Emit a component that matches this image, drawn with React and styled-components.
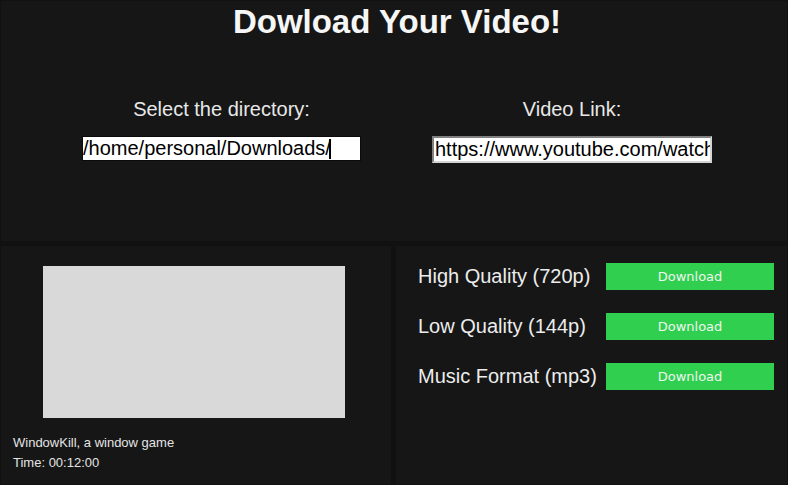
import React, { useEffect, useRef } from 'react';
import styled, { createGlobalStyle } from 'styled-components';

const GlobalStyle = createGlobalStyle`
  html, body {
    margin: 0;
    padding: 0;
    background: #111111;
  }
  body {
    font-family: "Liberation Sans", Arial, sans-serif;
  }
`;

const Page = styled.div`
  display: grid;
  grid-template-columns: 390px 1fr;
  grid-template-rows: 240px 1fr;
  gap: 5px;
  padding: 1px;
  width: 788px;
  height: 485px;
  box-sizing: border-box;
  background: #111111;
`;

const Panel = styled.section`
  background: #161616;
  color: #ececec;
  box-sizing: border-box;
  min-width: 0;
`;

const Header = styled(Panel)`
  grid-column: 1 / 3;
  padding: 2px 0 0 6px;
  display: flex;
  flex-direction: column;
  align-items: center;
`;

const Title = styled.h1`
  margin: 0;
  font-size: 33px;
  font-weight: bold;
  color: #f6f6f6;
`;

const Fields = styled.div`
  display: flex;
  justify-content: center;
  gap: 71px;
  margin-top: 57px;
`;

const Field = styled.label`
  display: flex;
  flex-direction: column;
  align-items: center;
  gap: 15px;
`;

const FieldLabel = styled.span`
  font-size: 20px;
  color: #e8e8e8;
`;

const TextInput = styled.input`
  box-sizing: border-box;
  width: ${(p) => p.$width}px;
  height: ${(p) => (p.$inset ? 27 : 25)}px;
  padding: 0 0 0 ${(p) => (p.$inset ? 1 : 0)}px;
  margin: 0;
  font-family: "Liberation Sans", Arial, sans-serif;
  font-size: 20px;
  color: #000;
  background-color: #fff;
  background-image: ${(p) =>
    p.$caret != null ? 'linear-gradient(#000, #000)' : 'none'};
  background-repeat: no-repeat;
  background-position: ${(p) => p.$caret || 0}px 2px;
  background-size: 2px 20px;
  border: ${(p) => (p.$inset ? '2px inset #d4d4d4' : '1px solid #0a0a0a')};
  border-radius: 0;
  outline: none;
  caret-color: transparent;
`;

const VideoPanel = styled(Panel)`
  display: flex;
  flex-direction: column;
  padding: 20px 0 0 12px;
`;

const Thumb = styled.div`
  width: 302px;
  height: 152px;
  margin-left: 30px;
  background: #d9d9d9;
`;

const Meta = styled.div`
  margin-top: 15px;
  font-size: 13px;
  line-height: 20px;
  color: #e4e4e4;
`;

const OptionsPanel = styled(Panel)`
  display: grid;
  grid-template-columns: 188px 168px;
  grid-auto-rows: 27px;
  row-gap: 23px;
  align-content: start;
  align-items: center;
  padding: 17px 0 0 22px;
`;

const OptionLabel = styled.span`
  font-size: 20px;
  color: #ececec;
  white-space: nowrap;
`;

const DownloadButton = styled.button`
  height: 27px;
  width: 168px;
  border: none;
  border-radius: 0;
  background: #30cf50;
  color: #eef6ee;
  font-family: "DejaVu Sans", sans-serif;
  font-size: 13px;
  padding: 0;
  cursor: pointer;
`;

const options = [
  { id: 'high', label: 'High Quality (720p)' },
  { id: 'low', label: 'Low Quality (144p)' },
  { id: 'mp3', label: 'Music Format (mp3)' },
];

export default function App() {
  const dirRef = useRef(null);

  useEffect(() => {
    const el = dirRef.current;
    if (el) {
      el.focus();
      el.setSelectionRange(el.value.length, el.value.length);
    }
  }, []);

  return (
    <>
      <GlobalStyle />
      <Page>
        <Header>
          <Title>Dowload Your Video!</Title>
          <Fields>
            <Field>
              <FieldLabel>Select the directory:</FieldLabel>
              <TextInput
                ref={dirRef}
                $width={279}
                $caret={246}
                defaultValue="/home/personal/Downloads/"
              />
            </Field>
            <Field>
              <FieldLabel>Video Link:</FieldLabel>
              <TextInput
                $width={280}
                $inset
                defaultValue="https://www.youtube.com/watch?v=windowkill"
              />
            </Field>
          </Fields>
        </Header>
        <VideoPanel>
          <Thumb />
          <Meta>
            <div>WindowKill, a window game</div>
            <div>Time: 00:12:00</div>
          </Meta>
        </VideoPanel>
        <OptionsPanel>
          {options.map((o) => (
            <React.Fragment key={o.id}>
              <OptionLabel>{o.label}</OptionLabel>
              <DownloadButton>Download</DownloadButton>
            </React.Fragment>
          ))}
        </OptionsPanel>
      </Page>
    </>
  );
}
